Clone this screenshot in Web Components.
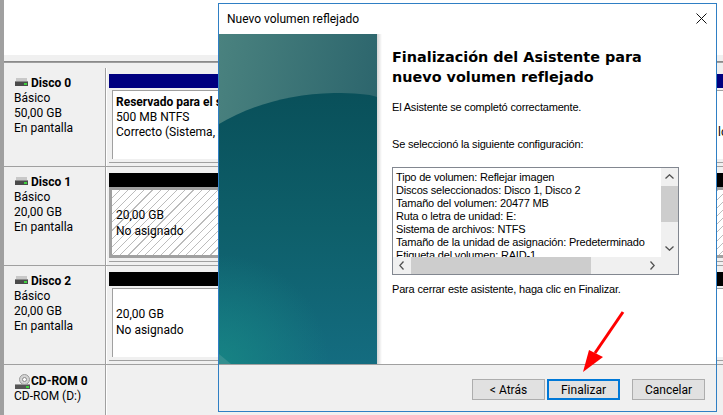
<!DOCTYPE html>
<html lang="es">
<head>
<meta charset="utf-8">
<title>Nuevo volumen reflejado</title>
<style>
  html, body { margin: 0; height: 100%; overflow: hidden; background: #f0f0f0; }
  body { font-family: Roboto, "Noto Sans", sans-serif; }
  .long { display: inline-block; width: 602px; }
</style>
</head>
<body>

<disk-console>
  <disk-row name="Disco 0" lines="Básico|50,00 GB|En pantalla" bar="#000080" kind="used">
    <b>Reservado para el sistema</b><br>500 MB NTFS<br><span class="long">Correcto (Sistema, Activo, Partición primaria)</span>lo
  </disk-row>
  <disk-row name="Disco 1" lines="Básico|20,00 GB|En pantalla" bar="#000" kind="hatched">
    20,00 GB<br>No asignado
  </disk-row>
  <disk-row name="Disco 2" lines="Básico|20,00 GB|En pantalla" bar="#000" kind="free">
    20,00 GB<br>No asignado
  </disk-row>
  <cd-row name="CD-ROM 0" sub="CD-ROM (D:)"></cd-row>
</disk-console>

<wizard-dialog caption="Nuevo volumen reflejado">
  <span slot="heading">Finalización del Asistente para nuevo volumen reflejado</span>
  <p slot="intro">El Asistente se completó correctamente.</p>
  <p slot="intro2">Se seleccionó la siguiente configuración:</p>
  <summary-box slot="summary">Tipo de volumen: Reflejar imagen
Discos seleccionados: Disco 1, Disco 2
Tamaño del volumen: 20477 MB
Ruta o letra de unidad: E:
Sistema de archivos: NTFS
Tamaño de la unidad de asignación: Predeterminado
Etiqueta del volumen: RAID-1</summary-box>
  <p slot="outro">Para cerrar este asistente, haga clic en Finalizar.</p>
  <wiz-button slot="buttons">&lt; Atrás</wiz-button>
  <wiz-button slot="buttons" primary>Finalizar</wiz-button>
  <wiz-button slot="buttons" class="cancel">Cancelar</wiz-button>
</wizard-dialog>

<script>
const hddIcon = `<svg width="13" height="9" viewBox="0 0 13 9">
  <rect x="1" y="0" width="11" height="3" fill="#c8c8c8"/>
  <rect x="0" y="3" width="13" height="5" fill="#4a4a4a"/>
  <rect x="0" y="3" width="13" height="1" fill="#8a8a8a"/>
  <rect x="9" y="5" width="3" height="2" fill="#3fd03f"/>
</svg>`;

const cdIcon = `<svg width="16" height="16" viewBox="0 0 16 16">
  <circle cx="9.5" cy="5.5" r="5" fill="#d4d4d4" stroke="#9a9a9a"/>
  <circle cx="9.5" cy="5.5" r="2" fill="#fff" stroke="#8a8a8a"/>
  <rect x="0" y="10" width="15" height="5" fill="#555"/>
  <rect x="0" y="10" width="15" height="1" fill="#9a9a9a"/>
  <rect x="11" y="12" width="3" height="2" fill="#3fd03f"/>
</svg>`;

class DiskConsole extends HTMLElement {
  constructor() {
    super();
    this.attachShadow({ mode: 'open' });
    this.shadowRoot.innerHTML = `
      <style>
        :host { display: flex; flex-direction: column; height: 415px; border-left: 4px solid #a0a0a0; box-sizing: border-box; font-size: 12px; color: #000; }
        #list { height: 55px; background: #fff; flex: none; }
        #gap { height: 6px; background: #f0f0f0; flex: none; }
        #rule { height: 2px; background: linear-gradient(#808080, #a8a8a8); flex: none; }
        #top { height: 5px; background: #f0f0f0; flex: none; }
      </style>
      <div id="list"></div>
      <div id="gap"></div>
      <div id="rule"></div>
      <div id="top"></div>
      <slot></slot>
    `;
  }
}

class DiskRow extends HTMLElement {
  constructor() {
    super();
    this.attachShadow({ mode: 'open' });
    const lines = (this.getAttribute('lines') || '').split('|').map(l => `<div>${l}</div>`).join('');
    this.shadowRoot.innerHTML = `
      <style>
        :host { display: flex; height: 99px; flex: none; line-height: 15px; box-sizing: border-box; border-bottom: 1px solid #a0a0a0; }
        #info { width: 102px; flex: none; background: #f0f0f0; padding: 8px 0 0 10px; box-sizing: border-box; border-right: 1px solid #a0a0a0; }
        #name { display: flex; align-items: center; gap: 3px; font-weight: 700; height: 15px; margin-left: 1px; }
        #name svg { margin-top: -3px; }
        #vol { flex: 1; min-width: 0; background: #f0f0f0; padding: 6px 0 0 2px; box-sizing: border-box; border-left: 1px solid #fff; }
        #bar { height: 14px; background: ${this.getAttribute('bar')}; }
        #part { height: 69px; margin-top: 2px; border-left: 1px solid #a0a0a0; border-top: 1px solid #a0a0a0; background: #fff; margin-left: 3px; padding: 1px 0 0 3px; box-sizing: border-box; white-space: nowrap; overflow: hidden; }
        #foot { height: 1px; margin-top: 3px; background: #a0a0a0; }
        :host([kind="hatched"]) #part {
          margin: 0; height: 71px; border: 3px solid #a0a0a0; border-right: 0; padding-left: 4px; padding-top: 17px; line-height: 16px;
          background: repeating-linear-gradient(135deg, #fff 0 5px, #bcbcbc 5px 5.8px);
        }
        :host([kind="free"]) #part { padding-top: 17px; line-height: 16px; }
        :host([kind="used"]) #part { padding-top: 4px; }
      </style>
      <div id="info">
        <div id="name">${hddIcon}<span>${this.getAttribute('name')}</span></div>
        ${lines}
      </div>
      <div id="vol">
        <div id="bar"></div>
        <div id="part"><slot></slot></div>
        <div id="foot"></div>
      </div>
    `;
  }
}

class CdRow extends HTMLElement {
  constructor() {
    super();
    this.attachShadow({ mode: 'open' });
    this.shadowRoot.innerHTML = `
      <style>
        :host { display: flex; flex: 1; line-height: 15px; }
        #info { width: 102px; flex: none; background: #f0f0f0; padding: 9px 0 0 10px; box-sizing: border-box; border-right: 1px solid #a0a0a0; }
        #name { display: flex; align-items: center; gap: 0; font-weight: 700; margin-left: 1px; height: 15px; }
        #rest { flex: 1; background: #f0f0f0; border-left: 1px solid #fff; }
      </style>
      <div id="info">
        <div id="name">${cdIcon}<span>${this.getAttribute('name')}</span></div>
        <div>${this.getAttribute('sub')}</div>
      </div>
      <div id="rest"></div>
    `;
  }
}

class WizardDialog extends HTMLElement {
  constructor() {
    super();
    this.attachShadow({ mode: 'open' });
    this.shadowRoot.innerHTML = `
      <style>
        :host { position: absolute; left: 218px; top: 3px; width: 499px; height: 409px; box-sizing: border-box; border: 1px solid #2f7fc4; background: #fff; display: flex; flex-direction: column; color: #000; }
        #title { height: 30px; flex: none; display: flex; align-items: center; justify-content: space-between; padding: 0 9px 1px 8px; box-sizing: border-box; font: 12px Roboto, sans-serif; }
        #main { flex: 1; display: flex; min-height: 0; }
        #banner { width: 158px; flex: none; display: block; }
        #shade { width: 5px; flex: none; background: linear-gradient(90deg, #d4d4d4, #fff); }
        #content { flex: 1; padding: 13px 0 0 10px; font: 11px/13px "Liberation Sans", sans-serif; letter-spacing: -.18px; }
        #heading { font: 700 14.4px/20px "DejaVu Sans", sans-serif; letter-spacing: 0; width: 290px; }
        ::slotted(p) { margin: 0; }
        #intro { margin-top: 14px; }
        #intro2 { margin-top: 24px; }
        #summary { margin-top: 16px; }
        #outro { margin-top: 8px; }
        #footer { height: 47px; flex: none; box-sizing: border-box; background: #f0f0f0; border-top: 1px solid #a0a0a0; display: flex; justify-content: flex-end; gap: 2px; padding: 14px 11px 0 0; }
      </style>
      <div id="title">
        <span>${this.getAttribute('caption')}</span>
        <svg width="11" height="11" viewBox="0 0 11 11"><path d="M.5.5l10 10M10.5.5l-10 10" stroke="#111" fill="none"/></svg>
      </div>
      <div id="main">
        <svg id="banner" width="158" height="330" viewBox="0 0 158 330">
          <defs>
            <linearGradient id="sky" x1="0" y1="0" x2="1" y2="0.35">
              <stop offset="0" stop-color="#4a827f"/><stop offset="1" stop-color="#2b646c"/>
            </linearGradient>
            <linearGradient id="sea" x1="0.6" y1="0" x2="0.6" y2="1">
              <stop offset="0" stop-color="#09505a"/><stop offset="0.5" stop-color="#0e5f6a"/><stop offset="1" stop-color="#146c80"/>
            </linearGradient>
            <radialGradient id="glow" gradientUnits="userSpaceOnUse" cx="0" cy="330" r="110">
              <stop offset="0" stop-color="#178684" stop-opacity=".9"/><stop offset="1" stop-color="#178684" stop-opacity="0"/>
            </radialGradient>
          </defs>
          <rect width="158" height="330" fill="url(#sky)"/>
          <path d="M0 90C30 72 70 60 115 59C135 59 150 60 158 63V330H0Z" fill="url(#sea)"/>
          <rect y="210" width="158" height="120" fill="url(#glow)"/>
          <path d="M0 320L12 330H0Z" fill="#5fa3a3" opacity=".4"/>
        </svg>
        <div id="shade"></div>
        <div id="content">
          <div id="heading"><slot name="heading"></slot></div>
          <div id="intro"><slot name="intro"></slot></div>
          <div id="intro2"><slot name="intro2"></slot></div>
          <div id="summary"><slot name="summary"></slot></div>
          <div id="outro"><slot name="outro"></slot></div>
        </div>
      </div>
      <div id="footer"><slot name="buttons"></slot></div>
    `;
  }
}

class SummaryBox extends HTMLElement {
  constructor() {
    super();
    this.attachShadow({ mode: 'open' });
    this.shadowRoot.innerHTML = `
      <style>
        :host { display: block; width: 287px; height: 108px; box-sizing: border-box; border: 1px solid #828790; position: relative; background: #fff; overflow: hidden; }
        #text { height: 89px; overflow: hidden; white-space: pre; padding: 3px 0 0 3px; box-sizing: border-box; }
        #v { position: absolute; right: 0; top: 0; width: 17px; height: 89px; background: #f0f0f0; }
        #h { position: absolute; left: 0; bottom: 0; right: 0; height: 17px; background: #f0f0f0; }
        #vt { position: absolute; left: 0; right: 0; top: 18px; height: 36px; background: #cdcdcd; }
        #ht { position: absolute; left: 18px; width: 180px; top: 0; bottom: 0; background: #cdcdcd; }
        svg { position: absolute; }
      </style>
      <div id="text"><slot></slot></div>
      <div id="v">
        <div id="vt"></div>
        <svg style="left:4px;top:6px" width="9" height="5"><path d="M.5 4.5L4.5.8l4 3.7" fill="none" stroke="#505050" stroke-width="1.3"/></svg>
        <svg style="left:4px;bottom:6px" width="9" height="5"><path d="M.5.5l4 3.7 4-3.7" fill="none" stroke="#505050" stroke-width="1.3"/></svg>
      </div>
      <div id="h">
        <div id="ht"></div>
        <svg style="left:6px;top:4px" width="5" height="9"><path d="M4.5.5L.8 4.5l3.7 4" fill="none" stroke="#505050" stroke-width="1.3"/></svg>
        <svg style="right:23px;top:4px" width="5" height="9"><path d="M.5.5l3.7 4-3.7 4" fill="none" stroke="#505050" stroke-width="1.3"/></svg>
      </div>
    `;
  }
}

class WizButton extends HTMLElement {
  constructor() {
    super();
    this.attachShadow({ mode: 'open' });
    this.shadowRoot.innerHTML = `
      <style>
        :host { display: flex; align-items: center; justify-content: center; width: 73px; height: 21px; box-sizing: border-box; border: 1px solid #adadad; background: #e1e1e1; font: 12px Roboto, sans-serif; letter-spacing: 0; color: #000; }
        :host([primary]) { border: 2px solid #0078d7; }
        :host(.cancel) { margin-left: 10px; }
      </style>
      <slot></slot>
    `;
  }
}

class RedArrow extends HTMLElement {
  constructor() {
    super();
    this.attachShadow({ mode: 'open' });
    this.shadowRoot.innerHTML = `
      <style>:host { position: absolute; left: 580px; top: 308px; width: 48px; height: 68px; display: block; }</style>
      <svg width="48" height="68" viewBox="0 0 48 68">
        <path d="M43 4L15 45" stroke="#f00" stroke-width="3" fill="none"/>
        <path d="M3 64L9 42L23 49Z" fill="#f00"/>
      </svg>
    `;
  }
}

customElements.define('disk-console', DiskConsole);
customElements.define('disk-row', DiskRow);
customElements.define('cd-row', CdRow);
customElements.define('wizard-dialog', WizardDialog);
customElements.define('summary-box', SummaryBox);
customElements.define('wiz-button', WizButton);
customElements.define('red-arrow', RedArrow);
document.body.appendChild(document.createElement('red-arrow'));
</script>
</body>
</html>
